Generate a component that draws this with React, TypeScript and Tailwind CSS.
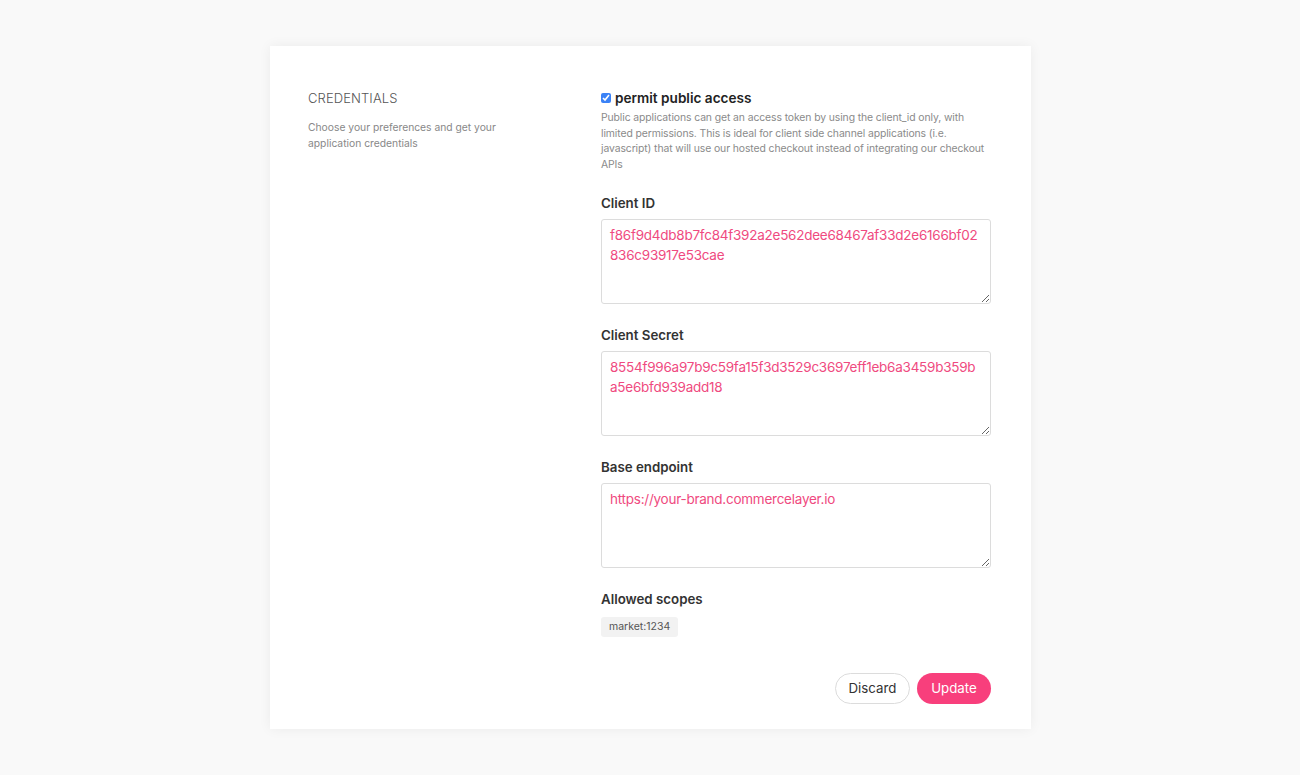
import React from "react";

const font = { fontFamily: "Inter, 'Noto Sans', Arial, sans-serif" };

function Field({ label, value }: { label: string; value: string }) {
  return (
    <div className="mt-[22px]">
      <div className="text-[13.3px] font-semibold text-[#333] leading-[18px]">{label}</div>
      <textarea
        readOnly
        defaultValue={value}
        className="mt-[7px] block w-[390px] h-[85px] border border-[#dcdcdc] rounded-[3px] px-[8px] py-[5px] text-[13.5px] leading-[20px] tracking-[-0.25px] text-[#ef4a80] break-all outline-none resize-y"
        style={font}
      />
    </div>
  );
}

export default function App() {
  return (
    <div className="min-h-[775px] bg-[#f9f9f9] pt-[46px]" style={font}>
      <div className="ml-[270px] w-[761px] h-[683px] bg-white shadow-[0_0_12px_rgba(0,0,0,0.06)] flex pl-[38px] pr-[40px] pt-[43px]">
        <div className="w-[293px] shrink-0">
          <h2 className="text-[13px] font-light text-[#555] leading-[18px] tracking-[0.1px]">CREDENTIALS</h2>
          <p className="mt-[12px] w-[196px] text-[10.3px] leading-[16px] text-[#888]">
            Choose your preferences and get your application credentials
          </p>
        </div>
        <div className="w-[390px]">
          <label className="flex items-center gap-[4px]">
            <input type="checkbox" defaultChecked className="w-[10px] h-[10px] accent-[#3b82f6]" />
            <span className="text-[13.6px] font-semibold text-[#222] leading-[18px]">permit public access</span>
          </label>
          <p className="mt-[3px] text-[10.4px] leading-[15.5px] tracking-[-0.1px] text-[#8a8a8a]">
            Public applications can get an access token by using the client_id only, with limited permissions. This is ideal for client side channel applications (i.e. javascript) that will use our hosted checkout instead of integrating our checkout APIs
          </p>
          <Field label="Client ID" value="f86f9d4db8b7fc84f392a2e562dee68467af33d2e6166bf02836c93917e53cae" />
          <Field label="Client Secret" value="8554f996a97b9c59fa15f3d3529c3697eff1eb6a3459b359ba5e6bfd939add18" />
          <Field label="Base endpoint" value="https://your-brand.commercelayer.io" />
          <div className="mt-[22px] text-[13.3px] font-semibold text-[#333] leading-[18px]">Allowed scopes</div>
          <span className="mt-[9px] inline-block bg-[#f2f2f2] rounded-[3px] px-[8px] text-[10.5px] leading-[20px] text-[#555]">
            market:1234
          </span>
          <div className="mt-[36px] flex justify-end gap-[7px]">
            <button className="h-[31px] w-[75px] rounded-full border border-[#dcdcdc] text-[13.3px] text-[#333] bg-white">
              Discard
            </button>
            <button className="h-[31px] w-[74px] rounded-full bg-[#f83f7c] text-[13.3px] text-white">
              Update
            </button>
          </div>
        </div>
      </div>
    </div>
  );
}
